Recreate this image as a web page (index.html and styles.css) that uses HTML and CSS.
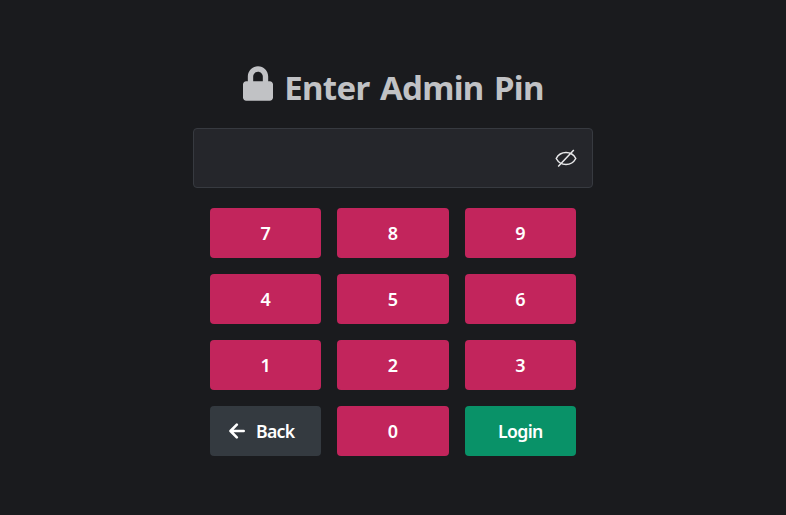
FILE: index.html
```html
<!DOCTYPE html>
<html lang="en">
<head>
<meta charset="utf-8">
<title>Enter Admin Pin</title>
<link rel="stylesheet" href="styles.css">
</head>
<body>
<main class="login">
  <h1 class="title">
    <svg class="lock" viewBox="0 0 448 512" aria-hidden="true"><path fill="currentColor" d="M400 224h-24v-72C376 68.200 307.800 0 224 0S72 68.200 72 152v72H48c-26.500 0-48 21.500-48 48v192c0 26.500 21.500 48 48 48h352c26.500 0 48-21.500 48-48V272c0-26.500-21.500-48-48-48zm-104 0H152v-72c0-39.700 32.300-72 72-72s72 32.300 72 72v72z"/></svg>
    <span class="title-text">Enter Admin Pin</span>
  </h1>
  <div class="field">
    <input class="pin" type="password" aria-label="Pin">
    <svg class="eye" viewBox="0 0 22 20" fill="none" stroke="currentColor" stroke-width="1.5" stroke-linejoin="round" aria-hidden="true"><path d="M1.200 10.500C5.500 2.600 16.500 2.600 20.800 10.500C16.500 18.400 5.500 18.400 1.200 10.500ZM3.200 18.500L18.800 2"/></svg>
  </div>
  <div class="keypad">
    <button class="key">7</button><button class="key">8</button><button class="key">9</button>
    <button class="key">4</button><button class="key">5</button><button class="key">6</button>
    <button class="key">1</button><button class="key">2</button><button class="key">3</button>
    <button class="key back"><svg class="arrow" viewBox="0 0 16 16" fill="none" stroke="currentColor" stroke-width="2.600" stroke-linecap="round" stroke-linejoin="round" aria-hidden="true"><path d="M7.800 1.700L1.500 8L7.800 14.300M2 8H14.700"/></svg><span class="label">Back</span></button>
    <button class="key">0</button>
    <button class="key submit"><span class="label login-label">Login</span></button>
  </div>
</main>
</body>
</html>
```
FILE: styles.css
```css
* { box-sizing: border-box; }
body { margin: 0; background: #1a1b1e; font-family: "Noto Sans", sans-serif; color: #c1c2c5; }
.login { width: 400px; margin: 0 auto; padding-top: 65px; }
.title { display: flex; justify-content: center; align-items: flex-start; gap: 11px; height: 63px; margin: 0; padding-left: 1px; font-size: 33px; line-height: 46px; font-weight: 700; white-space: nowrap; }
.title-text { letter-spacing: -0.7px; word-spacing: 2.5px; }
.lock { width: 30px; height: 35px; margin-top: 1px; }
.field { display: flex; align-items: center; height: 60px; padding-right: 15px; border: 1px solid #373a40; border-radius: 4px; background: #25262b; }
.pin { flex: 1; min-width: 0; height: 100%; border: 0; outline: 0; background: transparent; color: #c1c2c5; font-size: 24px; }
.eye { width: 22px; height: 20px; color: #e9e9eb; }
.keypad { display: grid; grid-template-columns: repeat(3, 1fr); gap: 16px; padding: 20px 17px 0; }
.key { display: flex; align-items: center; justify-content: center; height: 50px; padding: 0; border: 0; border-radius: 4px; background: #c2255c; color: #fff; font: 600 18px "Noto Sans", sans-serif; }
.back { gap: 11px; padding-right: 8px; background: #343a40; }
.arrow { width: 16px; height: 16px; }
.label { letter-spacing: -0.7px; font-size: 17.700px; }
.submit { background: #099268; }
```
